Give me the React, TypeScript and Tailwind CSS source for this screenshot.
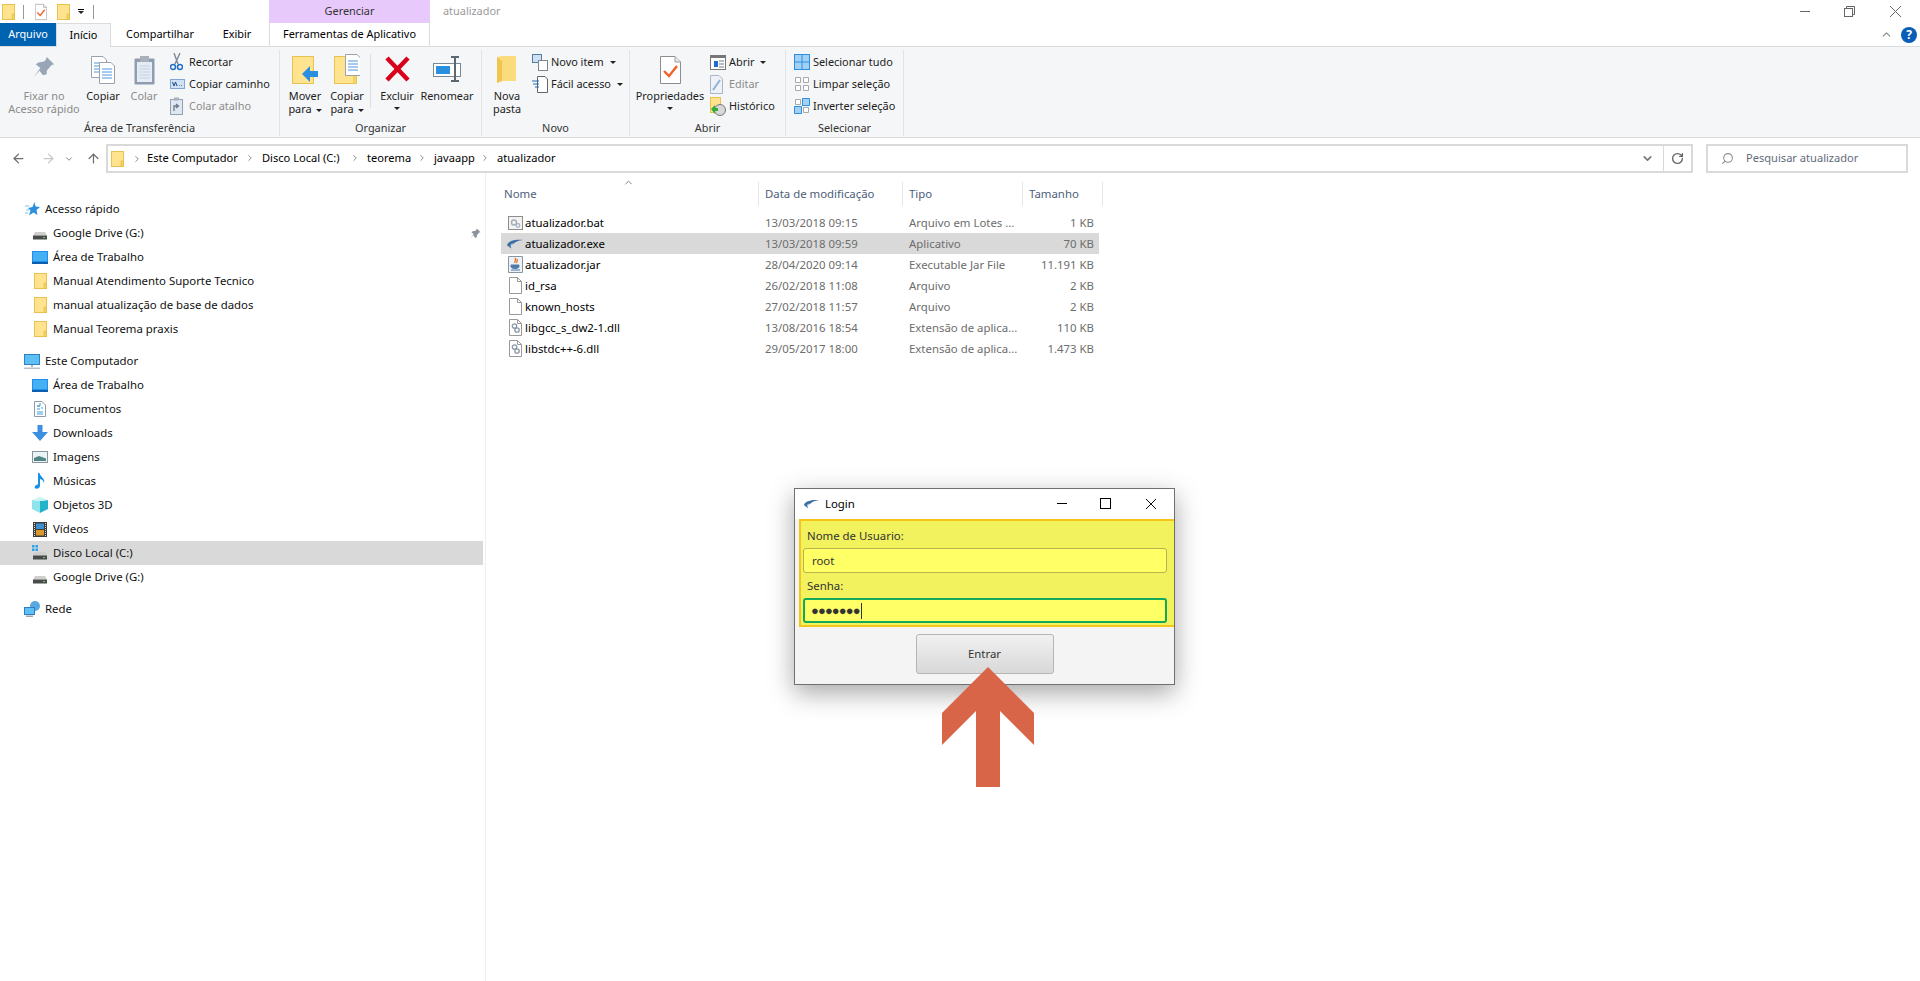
import type { ReactNode } from 'react';
import { ChevronRight, ChevronDown, ChevronUp, ArrowLeft, ArrowRight, ArrowUp, RotateCw, Search } from 'lucide-react';

const FONT = "font-['Noto_Sans',sans-serif]";

function Svg({ w, h, vb, children, className }: { w: number; h: number; vb?: string; children: ReactNode; className?: string }) {
  return (
    <svg width={w} height={h} viewBox={vb || `0 0 ${w} ${h}`} className={`shrink-0 ${className || ''}`}>
      {children}
    </svg>
  );
}

function Folder({ w = 13, h = 16 }: { w?: number; h?: number }) {
  return (
    <Svg w={w} h={h} vb="0 0 13 16">
      <rect x="0.5" y="0.5" width="12" height="15" fill="#ffe38f" stroke="#e8c14e" />
      <rect x="10" y="10" width="2.5" height="5.5" fill="#f6d263" stroke="#e0b840" strokeWidth="0.6" />
    </Svg>
  );
}

function Swoosh({ w = 16 }: { w?: number }) {
  return (
    <Svg w={w} h={10} vb="0 0 16 10">
      <path d="M0 6C1 3 6 0 16 1C11 1.5 8 3 6.5 5C5 4 3.5 5 3.5 7L4.5 9.5L1.5 7.5Z" fill="#3a6ea5" />
      <path d="M3.5 7C3.5 5.5 5 4.5 6.5 5L5 6Z" fill="#9ab4cf" />
    </Svg>
  );
}

function PageCheck({ w = 21, h = 28 }: { w?: number; h?: number }) {
  return (
    <Svg w={w} h={h} vb="0 0 21 28">
      <path d="M.5.5H15L20.5 6V27.5H.5Z" fill="#fff" stroke="#8d8d8d" />
      <path d="M15 .5V6H20.5" fill="#e8e8e8" stroke="#9d9d9d" />
      <path d="M4 15L9 20L17 10" fill="none" stroke="#f0622a" strokeWidth="2.4" />
    </Svg>
  );
}

function Doc({ x = 0, y = 0 }: { x?: number; y?: number }) {
  return (
    <g transform={`translate(${x} ${y})`}>
      <path d="M.5.5H12L15.5 4V21.5H.5Z" fill="#fff" stroke="#9aa3ad" />
      <path d="M3 7H13M3 10H13M3 13H13M3 16H13" stroke="#4e95e0" strokeWidth="1" />
    </g>
  );
}

function HardDrive({ win }: { win?: boolean }) {
  return (
    <Svg w={16} h={16}>
      {win && <path d="M0 0h2.5v2.5H0zM3.5 0H6v2.5H3.5zM0 3.5h2.5V6H0zM3.5 3.5H6V6H3.5z" fill="#2aa2ea" />}
      <path d="M3 7H13L15 10.5H1Z" fill="#cfcfcf" />
      <rect x="1" y="10.5" width="14" height="4" fill="#4a4a4a" />
      <rect x="11" y="12" width="2" height="1" fill="#5cd65c" />
    </Svg>
  );
}

function Desktop() {
  return (
    <Svg w={16} h={13}>
      <rect width="16" height="12" fill="#1e8ee8" />
      <rect x="1" y="1" width="14" height="9" fill="#45b0f5" />
      <rect y="11" width="16" height="2" fill="#0c5fae" />
    </Svg>
  );
}

function Monitor() {
  return (
    <Svg w={16} h={15}>
      <rect x="0.5" y="0.5" width="15" height="10" fill="#5cc0f5" stroke="#2f7fc4" />
      <path d="M7 11H9V13H7Z" fill="#a9b6c2" />
      <rect y="13.5" width="16" height="1.5" fill="#b6c2cc" />
    </Svg>
  );
}

function SideIcon({ name }: { name: string }) {
  switch (name) {
    case 'star':
      return (
        <Svg w={15} h={14} vb="0 0 15 14">
          <path d="M9.5 0L10.5 4.5L15 5L11.5 8L12.5 13L8.5 10.5L4 13.5L5.5 8.5L3 6L7.5 5Z" fill="#2b8fe0" />
          <path d="M0 4H4M1 8H4M0 11H3" stroke="#7cc0f0" />
        </Svg>
      );
    case 'drive':
      return <HardDrive />;
    case 'disk':
      return <HardDrive win />;
    case 'desktop':
      return <Desktop />;
    case 'folder':
      return <Folder />;
    case 'pc':
      return <Monitor />;
    case 'docs':
      return (
        <Svg w={12} h={16}>
          <path d="M.5.5H8L11.5 4V15.5H.5Z" fill="#fff" stroke="#8f9aa5" />
          <path d="M3 5H6M3 8H6M7 7H9M3 11H9M3 13H9" stroke="#3c9be4" />
          <path d="M6 2V5H3" stroke="#3c9be4" fill="none" />
        </Svg>
      );
    case 'down':
      return (
        <Svg w={16} h={16}>
          <path d="M5.5 0H10.5V7H16L8 16L0 7H5.5Z" fill="#3a8fe0" />
        </Svg>
      );
    case 'images':
      return (
        <Svg w={16} h={12}>
          <rect x="0.5" y="0.5" width="15" height="11" fill="#eaf3f6" stroke="#8d959d" />
          <path d="M2 7L7 5L14 7.5V10H2Z" fill="#4f8585" />
        </Svg>
      );
    case 'music':
      return (
        <Svg w={12} h={16}>
          <path d="M4 0H5.5C6 4 11.5 5 10 10C9.5 7.5 8 6.5 6 6V13C6 15 3.5 16 1.5 15.5C0 15 0.5 12 4 11.5Z" fill="#1a8fe8" />
        </Svg>
      );
    case 'cube':
      return (
        <Svg w={16} h={16}>
          <path d="M8 4L16 3V12L8 16Z" fill="#23b4c9" />
          <path d="M8 4L0 3V12L8 16Z" fill="#8fe3ea" />
          <path d="M8 4L16 3L8 0L0 3Z" fill="#c9f2f5" />
        </Svg>
      );
    case 'video':
      return (
        <Svg w={14} h={15}>
          <rect width="14" height="15" fill="#3c3c3c" />
          <rect x="3" y="1.5" width="8" height="5.5" fill="#3e8ed0" />
          <rect x="3" y="8" width="8" height="5.5" fill="#d89a2c" />
          <path d="M1.5 1V14M12.5 1V14" stroke="#ddd" strokeDasharray="1 1" />
        </Svg>
      );
    default:
      return (
        <Svg w={16} h={16}>
          <circle cx="11" cy="5" r="5" fill="#5aa8e0" />
          <rect x="0.5" y="6.5" width="10" height="7" fill="#5cc0f5" stroke="#2f7fc4" />
          <rect x="2" y="14.5" width="7" height="1.5" fill="#9aa7b2" />
        </Svg>
      );
  }
}

function SideRow({ icon, label, top, selected, pin }: { icon: string; label: string; top?: boolean; selected?: boolean; pin?: boolean }) {
  return (
    <div className={`flex h-6 items-center ${selected ? 'bg-[#d9d9d9]' : ''}`}>
      <span className={`flex justify-center ${top ? 'ml-6 mr-[5px] w-4' : 'ml-8 mr-[5px] w-4'}`}>
        <SideIcon name={icon} />
      </span>
      <span className="flex-1">{label}</span>
      {pin && (
        <Svg w={11} h={11} vb="0 0 24 24" className="mr-[2px]">
          <path d="M15 1L23 9L20 10L15 16L15 20L11 21L7 16L1 23L8 13L3 9L6 7L12 6L14 4Z" fill="#8d939a" />
        </Svg>
      )}
    </div>
  );
}

function Caret({ className }: { className?: string }) {
  return <span className={`inline-block h-0 w-0 border-x-[3px] border-t-[3px] border-x-transparent border-t-[#222] ${className || ''}`} />;
}

function SmallAction({ icon, label, off, caret }: { icon: ReactNode; label: string; off?: boolean; caret?: boolean }) {
  return (
    <div className={`flex h-[22px] items-center ${off ? 'text-[#8b8b8b]' : 'text-[#1c1c1c]'}`}>
      <span className="flex w-[19px] justify-start">{icon}</span>
      <span>{label}</span>
      {caret && <Caret className="ml-1.5" />}
    </div>
  );
}

function BigAction({ icon, lines, off, caret, width }: { icon: ReactNode; lines: string[]; off?: boolean; caret?: boolean; width: string }) {
  return (
    <div className={`flex flex-col items-center ${width} ${off ? 'text-[#8b8b8b]' : 'text-[#1c1c1c]'}`}>
      <div className="flex h-[38px] items-start justify-center pt-[5px]">{icon}</div>
      {lines.map((line, i) => (
        <div key={line} className="h-[13px] whitespace-nowrap leading-[13px]">
          {line}
          {caret && i === lines.length - 1 && lines.length > 1 && <Caret className="ml-1 align-middle" />}
        </div>
      ))}
      {caret && lines.length === 1 && (
        <div className="flex h-[13px] items-center">
          <Caret />
        </div>
      )}
    </div>
  );
}

function RibbonGroup({ label, width, children }: { label: string; width: string; children: ReactNode }) {
  return (
    <div className={`mt-[3px] flex h-[86px] flex-col border-r border-[#e1e3e6] pt-[1px] ${width}`}>
      <div className="flex h-[70px]">{children}</div>
      <div className="flex h-[15px] items-center justify-center text-[#333]">{label}</div>
    </div>
  );
}

function Ribbon() {
  return (
    <div className="flex h-[92px] border-y border-[#dadbdc] bg-[#f5f6f7] text-[10.9px]">
      <RibbonGroup label="Área de Transferência" width="w-[280px]">
        <BigAction
          width="w-[88px]"
          off
          lines={['Fixar no', 'Acesso rápido']}
          icon={
            <Svg w={22} h={22} vb="0 0 24 24">
              <path d="M15 1L23 9L20 10L15 16L15 20L11 21L7 16L1 23L8 13L3 9L6 7L12 6L14 4Z" fill="#98a6b8" />
            </Svg>
          }
        />
        <BigAction
          width="w-[30px]"
          lines={['Copiar']}
          icon={
            <Svg w={24} h={28}>
              <Doc x={0} y={0} />
              <Doc x={8} y={6} />
            </Svg>
          }
        />
        <BigAction
          width="w-[52px]"
          off
          lines={['Colar']}
          icon={
            <Svg w={21} h={29}>
              <rect x="0.5" y="2.5" width="20" height="26" rx="1" fill="#8f9dae" />
              <rect x="3" y="6" width="15" height="20" fill="#e6ecf5" />
              <rect x="6" y="0" width="9" height="6" fill="#a7b0bb" />
              <path d="M5 10H16M5 13H16M5 16H16M5 19H16M5 22H16" stroke="#c3d0e2" />
            </Svg>
          }
        />
        <div className="flex flex-col">
          <SmallAction
            label="Recortar"
            icon={
              <Svg w={13} h={18}>
                <path d="M4 0L8 11M10 0L5 11" stroke="#7f8a96" strokeWidth="1.4" />
                <circle cx="3" cy="14" r="2.5" fill="none" stroke="#1f6fc4" strokeWidth="1.5" />
                <circle cx="10" cy="14" r="2.5" fill="none" stroke="#1f6fc4" strokeWidth="1.5" />
              </Svg>
            }
          />
          <SmallAction
            label="Copiar caminho"
            icon={
              <Svg w={15} h={10}>
                <rect x="0.5" y="0.5" width="14" height="9" fill="#cfe2f6" stroke="#7ca7d6" />
                <path d="M2.5 3L4 7L5.5 3L7 7M9 6.5H9.6M11 6.5H11.6" stroke="#234a78" fill="none" />
              </Svg>
            }
          />
          <SmallAction
            off
            label="Colar atalho"
            icon={
              <Svg w={13} h={18}>
                <rect x="0.5" y="2.5" width="12" height="15" fill="#dfe7f1" stroke="#93a0af" />
                <rect x="4" y="0.5" width="5" height="3" fill="#a7b0bb" />
                <path d="M4 14V9H8M6 7L8.5 9L6 11" fill="none" stroke="#6c7a8a" strokeWidth="1.3" />
              </Svg>
            }
          />
        </div>
      </RibbonGroup>

      <RibbonGroup label="Organizar" width="w-[202px]">
        <BigAction
          width="w-[44px] ml-[3px]"
          caret
          lines={['Mover', 'para']}
          icon={
            <Svg w={26} h={28}>
              <rect x="0.5" y="0.5" width="21" height="27" fill="#ffe38f" stroke="#e8c14e" />
              <path d="M26 15H18V10L10 18L18 26V21H26Z" fill="#2b8fe0" />
            </Svg>
          }
        />
        <BigAction
          width="w-[40px]"
          caret
          lines={['Copiar', 'para']}
          icon={
            <Svg w={26} h={30} className="-mt-[2px]">
              <rect x="0.5" y="2.5" width="22" height="27" fill="#ffe38f" stroke="#e8c14e" />
              <rect x="19" y="21" width="3.5" height="8.5" fill="#f6d263" />
              <Doc x={11} y={0} />
            </Svg>
          }
        />
        <div className="mx-[3px] mt-[3px] h-[54px] w-px bg-[#dcdfe3]" />
        <BigAction
          width="w-[46px]"
          caret
          lines={['Excluir']}
          icon={
            <Svg w={25} h={26}>
              <path d="M2 2L23 24M23 2L2 24" stroke="#d9001b" strokeWidth="4.5" />
            </Svg>
          }
        />
        <BigAction
          width="w-[54px]"
          lines={['Renomear']}
          icon={
            <Svg w={28} h={26}>
              <rect x="0.5" y="7.5" width="27" height="13" fill="#fff" stroke="#7d8790" />
              <rect x="3" y="10" width="14" height="8" fill="#2b8fe0" />
              <path d="M18 1H26M18 25H26M22 1V25" stroke="#5d6770" strokeWidth="2" />
            </Svg>
          }
        />
      </RibbonGroup>

      <RibbonGroup label="Novo" width="w-[148px]">
        <BigAction
          width="w-[50px]"
          lines={['Nova', 'pasta']}
          icon={
            <Svg w={20} h={28}>
              <path d="M0 1L5 0H19V25H5L0 27Z" fill="#fbdc7c" />
              <path d="M0 1L5 5V25L0 27Z" fill="#f2c64e" />
            </Svg>
          }
        />
        <div className="flex flex-col">
          <SmallAction
            caret
            label="Novo item"
            icon={
              <Svg w={17} h={17}>
                <rect x="0.5" y="0.5" width="9" height="8" fill="#cfe0f2" stroke="#557ba3" />
                <rect x="6.5" y="6.5" width="9" height="10" fill="#fff" stroke="#7b8691" />
              </Svg>
            }
          />
          <SmallAction
            caret
            label="Fácil acesso"
            icon={
              <Svg w={17} h={18}>
                <path d="M5.5 1.5H13L15.5 4V17.5H5.5Z" fill="#fff" stroke="#666" />
                <path d="M0 6H7M1 9H7M3 12H7" stroke="#2467b4" />
              </Svg>
            }
          />
        </div>
      </RibbonGroup>

      <RibbonGroup label="Abrir" width="w-[156px]">
        <BigAction width="w-[80px]" caret lines={['Propriedades']} icon={<PageCheck />} />
        <div className="flex flex-col">
          <SmallAction
            caret
            label="Abrir"
            icon={
              <Svg w={16} h={15}>
                <rect x="0.5" y="0.5" width="15" height="14" fill="#fff" stroke="#777" />
                <rect y="0" width="16" height="3" fill="#777" />
                <rect x="4" y="6" width="4" height="6" fill="#1d6fd0" />
                <path d="M9 6H14M9 9H14M9 12H14" stroke="#6a7a8c" />
              </Svg>
            }
          />
          <SmallAction
            off
            label="Editar"
            icon={
              <Svg w={13} h={19}>
                <path d="M.5.5H9L12.5 4V18.5H.5Z" fill="#eef2f7" stroke="#aab6c6" />
                <path d="M3 15L10 5" stroke="#8fb0d8" strokeWidth="2" />
              </Svg>
            }
          />
          <SmallAction
            label="Histórico"
            icon={
              <Svg w={16} h={19}>
                <rect x="0.5" y="0.5" width="10" height="15" fill="#ffe38f" stroke="#e8c14e" />
                <circle cx="10" cy="13" r="5.5" fill="#d8d8d8" stroke="#777" />
                <path d="M1 12L5 8V11H8V14H5V17Z" fill="#2fae3a" />
              </Svg>
            }
          />
        </div>
      </RibbonGroup>

      <RibbonGroup label="Selecionar" width="w-[118px]">
        <div className="ml-2 flex flex-col">
          <SmallAction
            label="Selecionar tudo"
            icon={
              <Svg w={16} h={16}>
                <path d="M0 0H16V16H0Z" fill="#2b8fe0" />
                <path d="M1 1H7.5V7.5H1ZM8.5 1H15V7.5H8.5ZM1 8.5H7.5V15H1ZM8.5 8.5H15V15H8.5Z" fill="#a3d1f5" />
              </Svg>
            }
          />
          <SmallAction
            label="Limpar seleção"
            icon={
              <Svg w={16} h={16}>
                <path d="M1.5 1.5H6.5V6.5H1.5ZM9.5 1.5H14.5V6.5H9.5ZM1.5 9.5H6.5V14.5H1.5ZM9.5 9.5H14.5V14.5H9.5Z" fill="#fff" stroke="#a8a8a8" />
              </Svg>
            }
          />
          <SmallAction
            label="Inverter seleção"
            icon={
              <Svg w={16} h={16}>
                <path d="M1.5 1.5H6.5V6.5H1.5ZM9.5 9.5H14.5V14.5H9.5Z" fill="#fff" stroke="#a8a8a8" />
                <path d="M8.5 .5H15.5V7.5H8.5ZM.5 8.5H7.5V15.5H.5Z" fill="#a3d1f5" stroke="#2b8fe0" />
              </Svg>
            }
          />
        </div>
      </RibbonGroup>
    </div>
  );
}

const CRUMBS = [
  { label: 'Este Computador', width: 'w-[115px]' },
  { label: 'Disco Local (C:)', width: 'w-[105px]' },
  { label: 'teorema', width: 'w-[67px]' },
  { label: 'javaapp', width: 'w-[63px]' },
  { label: 'atualizador', width: 'w-[70px]' },
];

function AddressBar() {
  return (
    <div className="flex h-[35px] items-start pt-1.5 text-[11.1px]">
      <div className="flex h-[29px] w-[106px] items-center text-[#6d6d6d]">
        <ArrowLeft size={15} className="ml-[11px]" />
        <ArrowRight size={15} className="ml-[15px] text-[#c8c8c8]" />
        <ChevronDown size={10} className="ml-[8px]" />
        <ArrowUp size={15} className="ml-[12px]" />
      </div>
      <div className="flex h-[29px] flex-1 items-center border-y-2 border-l-2 border-[#d9d9d9] pl-[3px]">
        <Folder />
        <ChevronRight size={10} className="ml-[8px] mr-[5px] text-[#777]" />
        {CRUMBS.map((crumb, i) => (
          <span key={crumb.label} className={`flex items-center whitespace-nowrap ${crumb.width}`}>
            <span className="flex-1">{crumb.label}</span>
            {i < CRUMBS.length - 1 && <ChevronRight size={10} className="mr-[7px] text-[#777]" />}
          </span>
        ))}
        <div className="flex-1" />
        <ChevronDown size={13} strokeWidth={3} className="mr-[9px] text-[#777]" />
      </div>
      <div className="flex h-[29px] w-[30px] items-center justify-center border-y-2 border-l border-r-2 border-[#d9d9d9]">
        <RotateCw size={13} strokeWidth={2.5} className="text-[#666]" />
      </div>
      <div className="ml-[13px] mr-3 flex h-[29px] w-[202px] items-center border-2 border-[#d9d9d9] pl-[13px] text-[#5f6b7a]">
        <Search size={13} className="mr-[12px] -scale-x-100 text-[#8d8d8d]" />
        Pesquisar atualizador
      </div>
    </div>
  );
}

const QUICK = [
  { icon: 'drive', label: 'Google Drive (G:)', pin: true },
  { icon: 'desktop', label: 'Área de Trabalho' },
  { icon: 'folder', label: 'Manual Atendimento Suporte Tecnico' },
  { icon: 'folder', label: 'manual atualização de base de dados' },
  { icon: 'folder', label: 'Manual Teorema praxis' },
];

const COMPUTER = [
  { icon: 'desktop', label: 'Área de Trabalho' },
  { icon: 'docs', label: 'Documentos' },
  { icon: 'down', label: 'Downloads' },
  { icon: 'images', label: 'Imagens' },
  { icon: 'music', label: 'Músicas' },
  { icon: 'cube', label: 'Objetos 3D' },
  { icon: 'video', label: 'Vídeos' },
  { icon: 'disk', label: 'Disco Local (C:)', selected: true },
  { icon: 'drive', label: 'Google Drive (G:)' },
];

function Sidebar() {
  return (
    <div className="w-[486px] border-r border-[#efefef] pr-[2px] pt-6 text-[11.4px] text-[#111]">
      <SideRow icon="star" label="Acesso rápido" top />
      {QUICK.map((row) => (
        <SideRow key={row.label} {...row} />
      ))}
      <div className="h-2" />
      <SideRow icon="pc" label="Este Computador" top />
      {COMPUTER.map((row) => (
        <SideRow key={row.label} {...row} />
      ))}
      <div className="h-2" />
      <SideRow icon="net" label="Rede" top />
    </div>
  );
}

const FILES = [
  { icon: 'bat', name: 'atualizador.bat', date: '13/03/2018 09:15', type: 'Arquivo em Lotes ...', size: '1 KB' },
  { icon: 'exe', name: 'atualizador.exe', date: '13/03/2018 09:59', type: 'Aplicativo', size: '70 KB', selected: true },
  { icon: 'jar', name: 'atualizador.jar', date: '28/04/2020 09:14', type: 'Executable Jar File', size: '11.191 KB' },
  { icon: 'blank', name: 'id_rsa', date: '26/02/2018 11:08', type: 'Arquivo', size: '2 KB' },
  { icon: 'blank', name: 'known_hosts', date: '27/02/2018 11:57', type: 'Arquivo', size: '2 KB' },
  { icon: 'dll', name: 'libgcc_s_dw2-1.dll', date: '13/08/2016 18:54', type: 'Extensão de aplica...', size: '110 KB' },
  { icon: 'dll', name: 'libstdc++-6.dll', date: '29/05/2017 18:00', type: 'Extensão de aplica...', size: '1.473 KB' },
];

function FileIcon({ name }: { name: string }) {
  if (name === 'exe') return <Swoosh />;
  if (name === 'bat') {
    return (
      <Svg w={15} h={14}>
        <rect x="0.5" y="0.5" width="14" height="13" fill="#f3f3f3" stroke="#8d8d8d" />
        <circle cx="6" cy="6.5" r="2.5" fill="none" stroke="#a3afbc" strokeWidth="1.4" />
        <circle cx="10" cy="9.5" r="1.8" fill="none" stroke="#a3afbc" strokeWidth="1.2" />
      </Svg>
    );
  }
  if (name === 'jar') {
    return (
      <Svg w={15} h={17}>
        <path d="M.5.5H14.5V16.5H.5Z" fill="#edf2f7" stroke="#8996a5" />
        <path d="M7 2C9 4 6 5 7 7M9 3C10 5 8 6 9 7" stroke="#e76f1f" fill="none" strokeWidth="1.3" />
        <path d="M3 9H11V10.5C11 12 9 12.5 7 12.5C5 12.5 3 12 3 10.5ZM3 14H12" fill="#4d7ba8" stroke="#4d7ba8" />
      </Svg>
    );
  }
  return (
    <Svg w={13} h={17}>
      <path d="M.5.5H8.5L12.5 4.5V16.5H.5Z" fill="#fff" stroke="#9a9a9a" />
      <path d="M8.5.5V4.5H12.5" fill="none" stroke="#9a9a9a" />
      {name === 'dll' && (
        <>
          <circle cx="5.5" cy="7" r="2.2" fill="none" stroke="#8a97a6" strokeWidth="1.3" />
          <circle cx="8" cy="11" r="2.2" fill="none" stroke="#8a97a6" strokeWidth="1.3" />
        </>
      )}
    </Svg>
  );
}

function FileList() {
  return (
    <div className="relative flex-1 pl-[15px] text-[11.4px]">
      <div className="flex h-[33px] items-end text-[#4c607a]">
        <div className="flex h-6 w-[258px] items-center border-r border-[#e5e5e5] pl-[3px]">Nome</div>
        <div className="flex h-6 w-[144px] items-center border-r border-[#e5e5e5] pl-[6px]">Data de modificação</div>
        <div className="flex h-6 w-[120px] items-center border-r border-[#e5e5e5] pl-[6px]">Tipo</div>
        <div className="flex h-6 w-[80px] items-center border-r border-[#e5e5e5] pl-[6px]">Tamanho</div>
      </div>
      <ChevronUp size={11} className="absolute left-[137px] top-[4px] text-[#777]" />
      <div className="mt-[6px] w-[598px]">
        {FILES.map((file) => (
          <div key={file.name} className={`flex h-[21px] items-center whitespace-nowrap ${file.selected ? 'bg-[#d9d9d9]' : ''}`}>
            <span className="flex w-[24px] justify-center pl-1">
              <FileIcon name={file.icon} />
            </span>
            <span className="w-[234px] text-black">{file.name}</span>
            <span className="w-[144px] pl-[6px] text-[#6d6d6d]">{file.date}</span>
            <span className="w-[120px] pl-[6px] text-[#6d6d6d]">{file.type}</span>
            <span className="w-[71px] text-right text-[#6d6d6d]">{file.size}</span>
          </div>
        ))}
      </div>
    </div>
  );
}

function LoginDialog() {
  return (
    <div className="absolute left-[794px] top-[488px] flex h-[197px] w-[381px] flex-col border border-[#707070] bg-[#f4f4f4] text-[11.4px] shadow-[0_8px_24px_rgba(0,0,0,0.35)]">
      <div className="flex h-[30px] items-center bg-white pb-px">
        <span className="ml-[9px] mr-[6px]">
          <Swoosh w={15} />
        </span>
        <span className="flex-1 text-black">Login</span>
        <span className="mr-[33px] h-[1.5px] w-[10px] bg-black" />
        <span className="mr-[34px] h-[11px] w-[11px] border border-black" />
        <Svg w={12} h={12} className="mr-[17px]">
          <path d="M1 1L11 11M11 1L1 11" stroke="#111" strokeWidth="1" />
        </Svg>
      </div>
      <div className="ml-1 flex h-[108px] flex-col border-2 border-r-0 border-[#f5c518] bg-[#f2f25e] px-[2px] pt-[6px] text-[#333]">
        <div className="ml-[4px] h-[18px] leading-[18px]">Nome de Usuario:</div>
        <div className="mr-[5px] mt-[3px] flex h-[25px] items-center rounded-[3px] border border-[#b8b34a] bg-[#ffff66] pl-2">root</div>
        <div className="ml-[4px] mt-[4px] h-[18px] leading-[18px]">Senha:</div>
        <div className="mr-[5px] mt-[3px] flex h-[25px] items-center rounded-[3px] border-2 border-[#14a85a] bg-[#ffff66] pl-[6px]">
          <span className="text-[13px] font-bold tracking-[-0.9px] text-[#333]">●●●●●●●</span>
          <span className="ml-[1px] h-4 w-px bg-[#333]" />
        </div>
      </div>
      <div className="flex flex-1 justify-center pt-[7px]">
        <div className="flex h-10 w-[138px] items-center justify-center rounded-[3px] border border-[#b5b5b5] bg-gradient-to-b from-[#f1f1f1] to-[#d8d8d8] text-[#333]">
          Entrar
        </div>
      </div>
    </div>
  );
}

function BigArrow() {
  return (
    <svg width="92" height="120" viewBox="0 0 92 120" className="absolute left-[942px] top-[667px]">
      <path d="M46 0L92 46V78L58 44V120H34V44L0 78V46Z" fill="#d96548" />
    </svg>
  );
}

export default function App() {
  return (
    <div className={`relative flex h-[981px] w-[1920px] flex-col overflow-hidden bg-white ${FONT}`}>
      <div className="flex h-[23px] items-center text-[10.9px]">
        <span className="ml-[2px]">
          <Folder />
        </span>
        <span className="ml-2 h-3.5 w-px bg-[#9a9a9a]" />
        <span className="ml-[11px]">
          <PageCheck w={12} h={18} />
        </span>
        <span className="ml-[10px]">
          <Folder />
        </span>
        <span className="ml-2 flex flex-col items-center">
          <span className="mb-px h-px w-[6px] bg-black" />
          <Caret />
        </span>
        <span className="ml-[9px] h-3.5 w-px bg-[#9a9a9a]" />
        <div className="ml-[175px] flex h-full w-[161px] items-center justify-center bg-[#e8c9fb] text-[#333]">Gerenciar</div>
        <span className="ml-[13px] text-[#9a9a9a]">atualizador</span>
        <div className="flex-1" />
        <span className="h-px w-[10px] bg-[#666]" />
        <Svg w={11} h={11} className="ml-[34px]">
          <path d="M2.5 2.5V.5H10.5V8.5H8.5" fill="none" stroke="#666" />
          <rect x="0.5" y="2.5" width="8" height="8" fill="none" stroke="#666" />
        </Svg>
        <Svg w={11} h={11} className="ml-[35px] mr-[19px]">
          <path d="M0 0L11 11M11 0L0 11" stroke="#666" />
        </Svg>
      </div>

      <div className="flex h-[23px] text-[10.9px]">
        <div className="flex w-14 items-center justify-center bg-[#0063b1] text-white">Arquivo</div>
        <div className="relative z-10 -mb-px flex w-[55px] items-center justify-center border-x border-t border-[#dadbdc] bg-[#f5f6f7]">Início</div>
        <div className="flex w-[98px] items-center justify-center">Compartilhar</div>
        <div className="flex w-[56px] items-center justify-center">Exibir</div>
        <div className="ml-[4px] flex w-[161px] items-center justify-center border-x border-[#dadbdc]">Ferramentas de Aplicativo</div>
        <div className="flex-1" />
        <ChevronUp size={13} className="mr-[8px] mt-[5px] text-[#888]" />
        <div className="mb-[3px] mr-[3px] mt-[4px] flex h-4 w-4 items-center justify-center rounded-full bg-[#0b5db5] text-[12px] font-bold text-white">?</div>
      </div>

      <Ribbon />
      <AddressBar />

      <div className="flex flex-1">
        <Sidebar />
        <FileList />
      </div>

      <LoginDialog />
      <BigArrow />
    </div>
  );
}
